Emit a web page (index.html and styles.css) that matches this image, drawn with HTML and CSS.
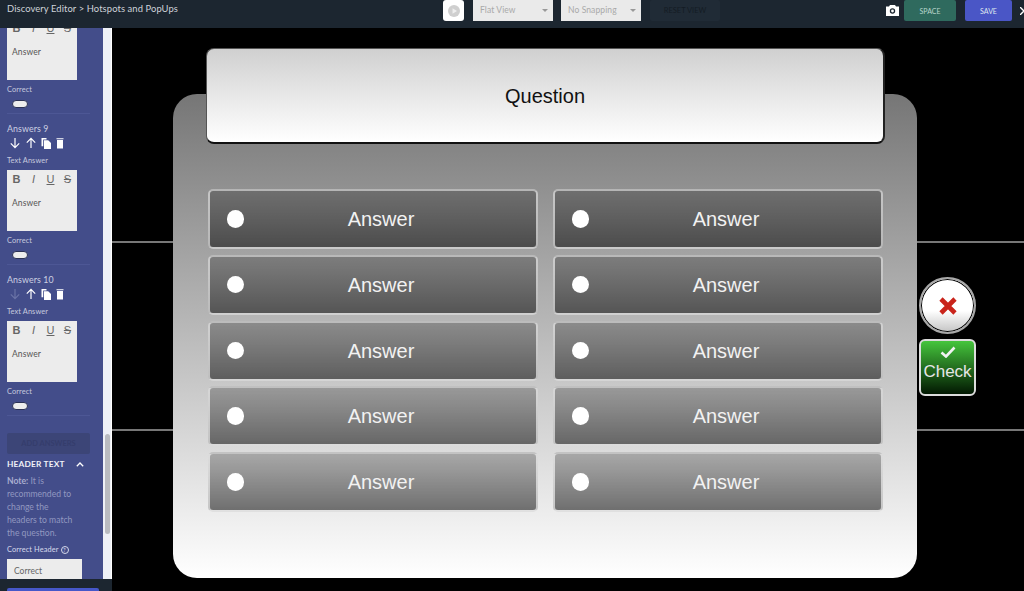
FILE: index.html
```html
<!DOCTYPE html>
<html lang="en">
<head>
<meta charset="utf-8">
<title>Discovery Editor</title>
<link rel="stylesheet" href="styles.css">
</head>
<body>
<svg class="defs" width="0" height="0" aria-hidden="true">
  <symbol id="down" viewBox="0 0 12 12"><path d="M6 1v9.500M1.800 6.400 6 10.600l4.200-4.200" fill="none" stroke="currentColor" stroke-width="1.200"/></symbol>
  <symbol id="up" viewBox="0 0 12 12"><path d="M6 11V1.500M1.800 5.600 6 1.400l4.200 4.200" fill="none" stroke="currentColor" stroke-width="1.200"/></symbol>
  <symbol id="copy" viewBox="0 0 12 12"><path d="M1.500 1h5v1.400H3.200v6.800H1.500z" fill="currentColor"/><path d="M4 3.200h4.200L11 6v6H4z" fill="currentColor"/></symbol>
  <symbol id="trash" viewBox="0 0 12 12"><path d="M2.500 1.200h7v1.100h-7zM3 3h6v8.500H3z" fill="currentColor"/></symbol>
</svg>
<header class="topbar">
  <div class="crumb">Discovery Editor &gt; Hotspots and PopUps</div>
  <div class="tools">
    <button class="play"><svg width="14" height="14" viewBox="0 0 14 14"><circle cx="7" cy="7" r="6" fill="#cfcfcf"/><path d="M5.500 4.200 10 7l-4.500 2.800z" fill="#eee"/></svg></button>
    <div class="select">Flat View<span class="caret"></span></div>
    <div class="select">No Snapping<span class="caret"></span></div>
    <button class="reset">RESET VIEW</button>
  </div>
  <div class="actions">
    <svg class="camera" width="13" height="11" viewBox="0 0 13 11"><path d="M4 0h5l1 1.500h3V11H0V1.500h3z" fill="#fff"/><circle cx="6.500" cy="6" r="2.700" fill="#1c2630"/><circle cx="6.500" cy="6" r="1.400" fill="#fff"/></svg>
    <button class="space">SPACE</button>
    <button class="save">SAVE</button>
    <svg class="more" width="4" height="8" viewBox="0 0 4 8"><path d="M0 0l4 4-4 4" fill="none" stroke="#fff" stroke-width="1.400"/></svg>
  </div>
</header>
<div class="workspace">
  <aside class="side">
    <div class="side-body">
      <div class="side-panel">
        <div class="side-content">
          <div class="editor">
            <div class="ed-tools"><b>B</b><i>I</i><u>U</u><s>S</s></div>
            <div class="ed-text">Answer</div>
          </div>
          <div class="label correct">Correct</div>
          <div class="toggle"></div>
          <hr class="rule">

          <div class="ans-title">Answers 9</div>
          <div class="ans-icons">
            <svg><use href="#down"/></svg><svg><use href="#up"/></svg><svg><use href="#copy"/></svg><svg><use href="#trash"/></svg>
          </div>
          <div class="label text-answer">Text Answer</div>
          <div class="editor">
            <div class="ed-tools"><b>B</b><i>I</i><u>U</u><s>S</s></div>
            <div class="ed-text">Answer</div>
          </div>
          <div class="label correct">Correct</div>
          <div class="toggle"></div>
          <hr class="rule">

          <div class="ans-title">Answers 10</div>
          <div class="ans-icons">
            <svg class="off"><use href="#down"/></svg><svg><use href="#up"/></svg><svg><use href="#copy"/></svg><svg><use href="#trash"/></svg>
          </div>
          <div class="label text-answer">Text Answer</div>
          <div class="editor">
            <div class="ed-tools"><b>B</b><i>I</i><u>U</u><s>S</s></div>
            <div class="ed-text">Answer</div>
          </div>
          <div class="label correct">Correct</div>
          <div class="toggle"></div>
          <hr class="rule">

          <button class="add">ADD ANSWERS</button>
          <div class="sec-head">HEADER TEXT
            <svg width="8" height="5" viewBox="0 0 8 5"><path d="M.8 4.200 4 1l3.200 3.200" fill="none" stroke="#fff" stroke-width="1.300"/></svg>
          </div>
          <p class="note"><b>Note:</b> It is recommended to change the headers to match the question.</p>
          <div class="label hdr-label">Correct Header <span class="help">?</span></div>
          <div class="input">Correct</div>
        </div>
      </div>
      <div class="track"><div class="thumb"></div></div>
    </div>
    <div class="side-foot"><div class="foot-btn"></div></div>
  </aside>
  <main class="canvas">
    <div class="line line-a"></div>
    <div class="line line-b"></div>
    <section class="panel">
      <div class="grid">
        <div class="answer"><span class="radio"></span>Answer</div>
        <div class="answer"><span class="radio"></span>Answer</div>
        <div class="answer"><span class="radio"></span>Answer</div>
        <div class="answer"><span class="radio"></span>Answer</div>
        <div class="answer"><span class="radio"></span>Answer</div>
        <div class="answer"><span class="radio"></span>Answer</div>
        <div class="answer"><span class="radio"></span>Answer</div>
        <div class="answer"><span class="radio"></span>Answer</div>
        <div class="answer"><span class="radio"></span>Answer</div>
        <div class="answer"><span class="radio"></span>Answer</div>
      </div>
    </section>
    <div class="question">Question</div>
    <div class="close"><svg width="20" height="20" viewBox="0 0 20 20"><path d="M3 3l14 14M17 3 3 17" stroke="#c9241b" stroke-width="4.600"/></svg></div>
    <div class="check">
      <svg width="16" height="12" viewBox="0 0 16 12"><path d="M1.500 6.500 6 10.500 14.500 1.500" fill="none" stroke="#f2f2f2" stroke-width="2.600"/></svg>
      <span>Check</span>
    </div>
  </main>
</div>
</body>
</html>
```
FILE: styles.css
```css
* { box-sizing: border-box; }
html, body { margin: 0; height: 100%; }
body {
  width: 1024px; height: 591px; overflow: hidden; background: #000;
  display: flex; flex-direction: column;
  font-family: Lato, "Open Sans", sans-serif;
}
button { font-family: inherit; border: 0; padding: 0; }
.defs { position: absolute; }

.topbar {
  position: relative; z-index: 2;
  height: 28px; flex: none; background: #1c2630;
  display: flex; align-items: flex-start;
}
.crumb { width: 443px; padding: 3px 0 0 7px; font-size: 9.400px; line-height: 12px; letter-spacing: .1px; color: #cfd3da; }
.tools { display: flex; align-items: flex-start; }
.play {
  width: 21px; height: 21px; background: #fff; border-radius: 3px;
  display: flex; align-items: center; justify-content: center; margin-right: 9px;
}
.select {
  width: 80px; height: 21px; margin-right: 8px; background: #eaeaea; color: #a9a9a9;
  font-size: 8.500px; line-height: 21px; padding-left: 7px; position: relative; letter-spacing: .1px;
}
.caret {
  position: absolute; right: 5px; top: 9px; width: 0; height: 0;
  border: 3px solid transparent; border-top: 3px solid #999; border-bottom: 0;
}
.reset {
  width: 70px; height: 21px; margin-left: 1px; background: #202b36; color: #141c24;
  font-size: 7.500px; border-radius: 2px;
}
.actions { margin-left: auto; display: flex; align-items: flex-start; }
.camera { margin: 5px 5px 0 0; }
.space, .save { height: 21px; font-size: 7px; color: #dfe7ee; border-radius: 2px; }
.space { width: 52px; background: #2f6a5e; margin-right: 9px; color: #b9d6cc; }
.save { width: 47px; background: #4a56c6; margin-right: 8px; }
.more { margin-top: 7px; }

.workspace { flex: 1; display: flex; min-height: 0; }
.side { width: 112px; flex: none; display: flex; flex-direction: column; }
.side-body { flex: 1; display: flex; min-height: 0; }
.side-panel { width: 103px; background: #434d8a; overflow: hidden; }
.side-content { margin-top: -9px; padding-left: 7px; }
.track { width: 9px; background: #eef0f6; position: relative; border-right: 1px solid #fff; }
.thumb { position: absolute; left: 2px; top: 406px; width: 5px; height: 100px; border-radius: 3px; background: #b9bbc0; }
.side-foot { height: 12px; background: #1c2630; padding: 9px 0 0 7px; flex: none; overflow: hidden; }
.foot-btn { width: 92px; height: 8px; background: #4657c9; border-radius: 2px; }

.editor { width: 70px; height: 61px; background: #ececec; color: #555; }
.ed-tools {
  height: 19px; display: flex; justify-content: space-between; align-items: center;
  padding: 0 4px; font: 11px/19px "Liberation Sans", sans-serif; color: #666;
}
.ed-tools b, .ed-tools i, .ed-tools u, .ed-tools s { width: 11px; text-align: center; }
.ed-text { font-size: 8.500px; line-height: 12px; padding: 8px 0 0 5px; letter-spacing: .1px; }
.label { font-size: 7.400px; line-height: 10px; color: #c5c9de; letter-spacing: .1px; }
.correct { margin-top: 5px; }
.toggle { width: 16px; height: 8px; margin: 5px 0 0 5px; border-radius: 4px; background: #eee; border: 1px solid #2c3356; }
.rule { width: 83px; margin: 5px 0 0; border: 0; border-top: 1px solid #4d5795; }
.ans-title { margin-top: 9px; font-size: 8.800px; line-height: 12px; color: #cdd0e2; letter-spacing: .1px; }
.ans-icons { height: 14px; display: flex; align-items: center; gap: 4px; padding-left: 2px; margin-top: 1px; color: #fff; }
.ans-icons svg { width: 12px; height: 12px; flex: none; }
.ans-icons svg:nth-child(3) { margin-left: -1px; }
.ans-icons svg:nth-child(4) { margin-left: -2px; }
.ans-icons .off { color: #6a73a6; }
.text-answer { margin: 6px 0 4px; }
.add {
  display: block; width: 83px; height: 21px; margin-top: 17px; background: #3c4577; color: #353d6c;
  font-size: 7.500px; font-weight: 700; border-radius: 2px;
}
.sec-head {
  margin-top: 5px; font-size: 8.300px; line-height: 11px; font-weight: 700; color: #f1f2f8; letter-spacing: .2px;
  display: flex; align-items: center; gap: 11px; height: 11px;
}
.note { margin: 5px 0 0; width: 72px; font-size: 8.600px; line-height: 13px; color: #9298c0; }
.note b { color: #a9aed0; }
.hdr-label { margin-top: 5px; display: flex; align-items: center; gap: 2px; color: #d6d9ea; }
.help {
  width: 8px; height: 8px; border: 1px solid #d6d9ea; border-radius: 50%;
  font-size: 6px; line-height: 6px; text-align: center;
}
.input { width: 75px; height: 24px; margin-top: 4px; background: #ececec; color: #666; font-size: 8.500px; line-height: 24px; padding-left: 7px; }

.canvas { flex: 1; position: relative; background: #000; overflow: hidden; }
.line { position: absolute; left: 0; right: 0; height: 2px; background: #777; }
.line-a { top: 213px; }
.line-b { top: 401px; }
.panel {
  position: absolute; left: 61px; top: 66px; width: 744px; height: 484px; border-radius: 24px;
  background: linear-gradient(#767676, #fff);
  padding: 95px 0 0 34.500px;
}
.grid { display: grid; grid-template-columns: 330px 330px; column-gap: 15px; grid-auto-rows: 60px; row-gap: 5.750px; }
.answer {
  position: relative; border: 2px solid rgba(255,255,255,.6); border-radius: 5px;
  background: linear-gradient(rgba(0,0,0,.24), rgba(0,0,0,.53));
  font: 20px/57px "Liberation Sans", sans-serif; color: #f2f2f2; text-align: center; padding-left: 17px;
}
.radio { position: absolute; left: 17px; top: 19px; width: 17.500px; height: 17.500px; border-radius: 50%; background: #fff; }
.question {
  position: absolute; left: 94px; top: 20px; width: 679px; height: 96px;
  border: 1px solid #555; border-bottom: 2px solid #111; border-right: 2px solid #222; border-radius: 8px;
  background: linear-gradient(#d0d0d0, #fff);
  font: 20px/94px "Liberation Sans", sans-serif; color: #111; text-align: center;
}
.close {
  position: absolute; left: 807px; top: 249px; width: 57px; height: 57px; border-radius: 50%;
  border: 2px solid #a8a8a8; box-shadow: inset 0 0 0 1px #000;
  background: linear-gradient(#fff 60%, #c4c4c4);
  display: flex; align-items: center; justify-content: center;
}
.check {
  position: absolute; left: 807px; top: 311px; width: 57px; height: 57px; border-radius: 6px;
  border: 2px solid #dcdcdc; background: linear-gradient(#45c53c, #021802);
  color: #e6e6e6; font: 17px/22px "Liberation Sans", sans-serif; text-align: center; padding-top: 5px;
}
.check svg { display: block; margin: 0 auto 3px; }
.check span { display: block; }
```
